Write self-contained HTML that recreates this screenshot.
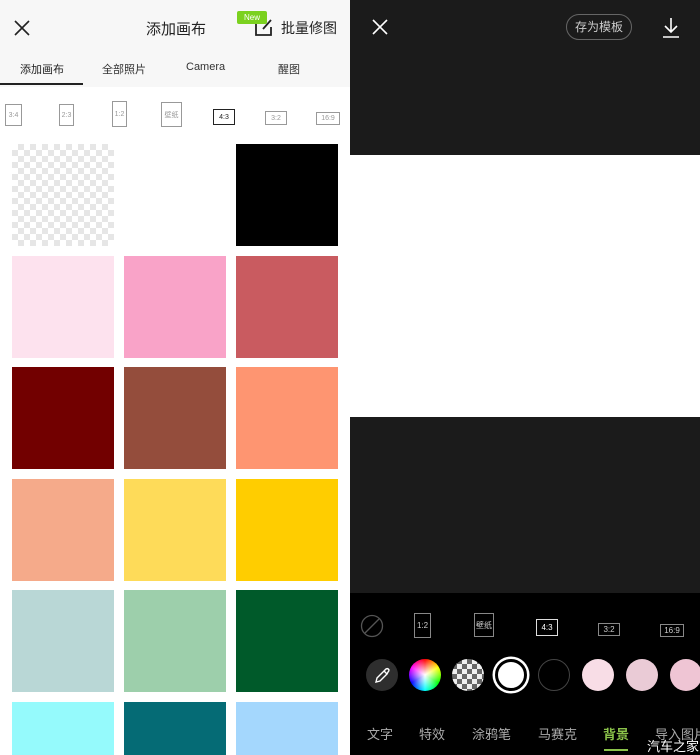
<!DOCTYPE html>
<html style="width:700px;height:755px;overflow:hidden"><head><meta charset="utf-8">
<style>
*{margin:0;padding:0;box-sizing:border-box}
body{width:700px;height:755px;overflow:hidden;font-family:"Liberation Sans","Noto Sans CJK SC",sans-serif;position:relative;background:#fff}
.a{position:absolute;white-space:nowrap}
.sw{position:absolute;width:102px;height:102px}
.r{position:absolute;border:1px solid #999;color:#999;font-size:7px;display:flex;align-items:center;justify-content:center;background:#fff}
.rd{position:absolute;border:1.5px solid #888;color:#ccc;font-size:8px;display:flex;align-items:center;justify-content:center}
.c{position:absolute;width:32px;height:32px;border-radius:50%;top:659px}
.t{position:absolute;top:724px;font-size:13px;color:#aaa;white-space:nowrap}
</style></head><body>
<div class="a" style="left:0;top:0;width:350px;height:87px;background:#f7f7f7"></div>
<svg class="a" style="left:14px;top:20px" width="16" height="16"><path d="M1 1L15 15M15 1L1 15" stroke="#222" stroke-width="1.6"/></svg>
<div class="a" style="left:146px;top:18px;font-size:15px;color:#222">添加画布</div>
<svg class="a" style="left:254px;top:17px" width="20" height="20"><path d="M2 5V18H17V10M9 12L17 3" stroke="#222" stroke-width="1.8" fill="none"/></svg>
<div class="a" style="left:237px;top:11px;width:30px;height:13px;background:#7bd11f;color:#fff;font-size:8px;text-align:center;line-height:13px;border-radius:2px">New</div>
<div class="a" style="left:281px;top:18px;font-size:14px;color:#222">批量修图</div>
<div class="a" style="left:20px;top:61px;font-size:11px;color:#222">添加画布</div>
<div class="a" style="left:102px;top:61px;font-size:11px;color:#333">全部照片</div>
<div class="a" style="left:186px;top:61px;font-size:11px;color:#333">Camera</div>
<div class="a" style="left:278px;top:61px;font-size:11px;color:#333">醒图</div>
<div class="a" style="left:0;top:83px;width:83px;height:2px;background:#222"></div>
<div class="r" style="left:5px;top:104px;width:17px;height:22px">3:4</div>
<div class="r" style="left:59px;top:104px;width:15px;height:22px">2:3</div>
<div class="r" style="left:112px;top:101px;width:15px;height:26px">1:2</div>
<div class="r" style="left:161px;top:102px;width:21px;height:25px">壁纸</div>
<div class="r" style="left:213px;top:109px;width:22px;height:16px;border:1.5px solid #222;color:#222">4:3</div>
<div class="r" style="left:265px;top:111px;width:22px;height:14px">3:2</div>
<div class="r" style="left:316px;top:112px;width:24px;height:13px">16:9</div>
<div class="sw" style="left:12px;top:144px;background-color:#fff;background-image:linear-gradient(45deg,#e6e6e6 25%,transparent 25%,transparent 75%,#e6e6e6 75%),linear-gradient(45deg,#e6e6e6 25%,transparent 25%,transparent 75%,#e6e6e6 75%);background-size:12px 12px;background-position:0 0,6px 6px"></div>
<div class="sw" style="left:236px;top:144px;background:#000"></div>
<div class="sw" style="left:12px;top:256px;background:#fde2ee"></div>
<div class="sw" style="left:124px;top:256px;background:#f9a3c8"></div>
<div class="sw" style="left:236px;top:256px;background:#c95b60"></div>
<div class="sw" style="left:12px;top:367px;background:#720000"></div>
<div class="sw" style="left:124px;top:367px;background:#944d3c"></div>
<div class="sw" style="left:236px;top:367px;background:#fe9571"></div>
<div class="sw" style="left:12px;top:479px;background:#f5aa8a"></div>
<div class="sw" style="left:124px;top:479px;background:#fedb59"></div>
<div class="sw" style="left:236px;top:479px;background:#ffcd00"></div>
<div class="sw" style="left:12px;top:590px;background:#b9d7d6"></div>
<div class="sw" style="left:124px;top:590px;background:#9dcfab"></div>
<div class="sw" style="left:236px;top:590px;background:#005a2a"></div>
<div class="sw" style="left:12px;top:702px;height:53px;background:#95fafc"></div>
<div class="sw" style="left:124px;top:702px;height:53px;background:#056b75"></div>
<div class="sw" style="left:236px;top:702px;height:53px;background:#a4d7fd"></div>
<div class="a" style="left:350px;top:0;width:350px;height:155px;background:#1b1b1b"></div>
<div class="a" style="left:350px;top:155px;width:350px;height:262px;background:#fff"></div>
<div class="a" style="left:350px;top:417px;width:350px;height:176px;background:#1b1b1b"></div>
<div class="a" style="left:350px;top:593px;width:350px;height:162px;background:#000"></div>
<svg class="a" style="left:372px;top:19px" width="16" height="16"><path d="M1 1L15 15M15 1L1 15" stroke="#fff" stroke-width="1.6"/></svg>
<div class="a" style="left:566px;top:14px;width:66px;height:26px;border:1px solid #666;border-radius:13px;color:#ccc;font-size:12px;text-align:center;line-height:24px">存为模板</div>
<svg class="a" style="left:661px;top:17px" width="20" height="22"><path d="M10 1V15M4 9L10 15L16 9M2 20H18" stroke="#fff" stroke-width="1.6" fill="none"/></svg>
<svg class="a" style="left:360px;top:614px" width="24" height="24"><circle cx="12" cy="12" r="10.5" stroke="#555" stroke-width="1.3" fill="none"/><path d="M5 19L19 5" stroke="#555" stroke-width="1.3"/></svg>
<div class="rd" style="left:414px;top:613px;width:17px;height:25px">1:2</div>
<div class="rd" style="left:474px;top:613px;width:20px;height:24px">壁纸</div>
<div class="rd" style="left:536px;top:619px;width:22px;height:17px;border-color:#ddd;color:#fff">4:3</div>
<div class="rd" style="left:598px;top:623px;width:22px;height:13px">3:2</div>
<div class="rd" style="left:660px;top:624px;width:24px;height:13px">16:9</div>
<div class="c" style="left:366px;background:#2e2e2e"></div>
<svg class="a" style="left:373px;top:666px" width="18" height="18"><path d="M3 16L4 12L11 5L14 8L7 15Z M11 5L13 3Q15 2 16 4Q16 5 15 6L14 8" stroke="#fff" stroke-width="1.4" fill="none"/></svg>
<div class="c" style="left:409px;background:radial-gradient(circle,#fff 0%,rgba(255,255,255,0) 70%),conic-gradient(red,#ff0,lime,cyan,blue,#f0f,red)"></div>
<div class="c" style="left:452px;background-color:#eee;background-image:linear-gradient(45deg,#666 25%,transparent 25%,transparent 75%,#666 75%),linear-gradient(45deg,#666 25%,transparent 25%,transparent 75%,#666 75%);background-size:10px 10px;background-position:0 0,5px 5px"></div>
<div class="c" style="left:495px;background:#fff;border:3px solid #000;box-shadow:0 0 0 2.5px #fff"></div>
<div class="c" style="left:538px;background:#000;border:1px solid #444"></div>
<div class="c" style="left:582px;background:#f8dde6"></div>
<div class="c" style="left:626px;background:#eacbd6"></div>
<div class="c" style="left:670px;background:#efc5d4"></div>
<div class="t" style="left:367px">文字</div>
<div class="t" style="left:419px">特效</div>
<div class="t" style="left:472px">涂鸦笔</div>
<div class="t" style="left:538px">马赛克</div>
<div class="t" style="left:603px;color:#8bc34a;font-weight:bold">背景</div>
<div class="a" style="left:604px;top:749px;width:24px;height:2px;background:#8bc34a"></div>
<div class="t" style="left:655px">导入图片</div>
<div class="a" style="left:647px;top:736px;font-size:13px;color:#fff">汽车之家</div>
</body></html>
